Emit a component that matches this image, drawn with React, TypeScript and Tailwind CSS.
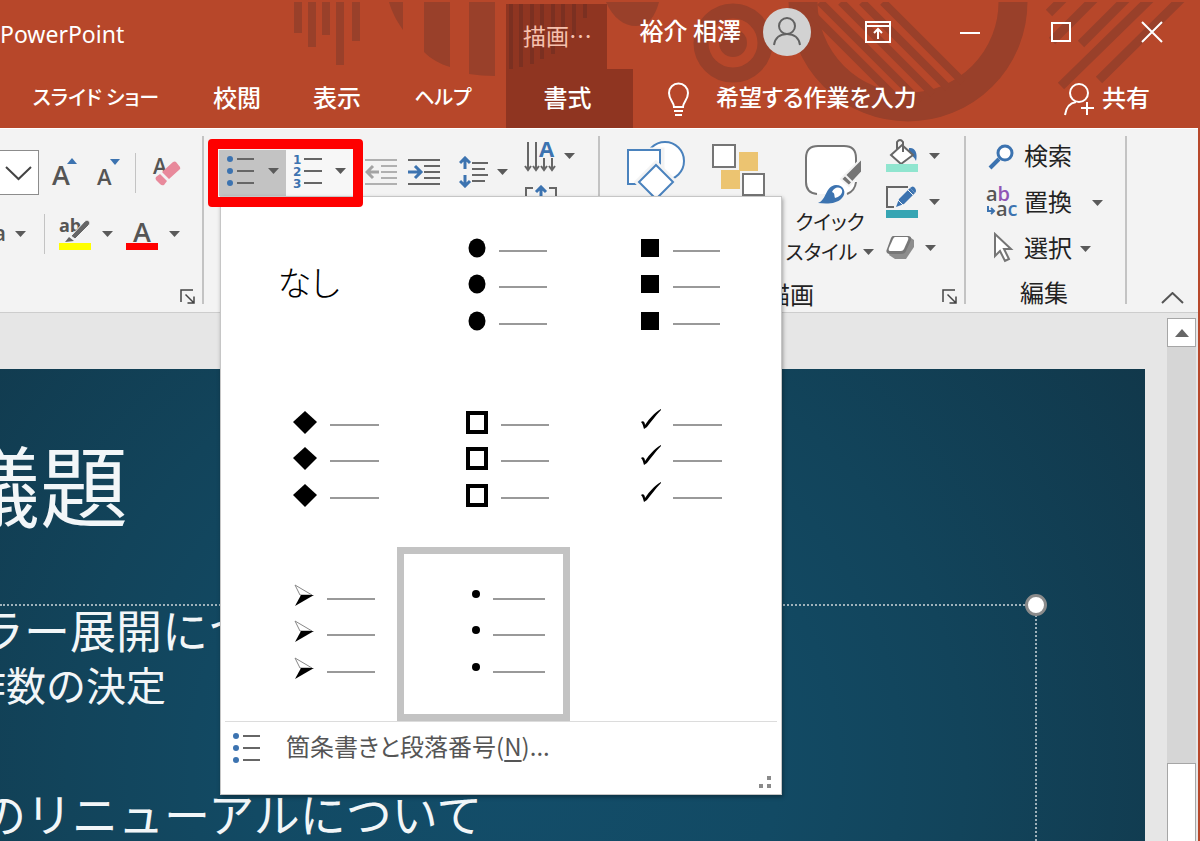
import type { ReactNode } from "react";

type Glyph = "disc" | "square" | "diamond" | "box" | "check" | "arrow" | "dot";

const BULLETS: { glyph: Glyph; label: string; lineFrom: number; lineTo: number; selected?: boolean }[] = [
  { glyph: "disc", label: "塗りつぶし丸の行頭文字", lineFrom: 102, lineTo: 150 },
  { glyph: "square", label: "塗りつぶし四角の行頭文字", lineFrom: 103, lineTo: 150 },
  { glyph: "diamond", label: "塗りつぶしひし形の行頭文字", lineFrom: 106, lineTo: 155 },
  { glyph: "box", label: "四角の行頭文字", lineFrom: 104, lineTo: 152 },
  { glyph: "check", label: "チェック マークの行頭文字", lineFrom: 103, lineTo: 152 },
  { glyph: "arrow", label: "矢印の行頭文字", lineFrom: 103, lineTo: 151 },
  { glyph: "dot", label: "小さい丸の行頭文字", lineFrom: 96, lineTo: 148, selected: true },
];

const ROWS = [49, 85, 122];

function Caret() {
  return (
    <svg width="11" height="6" viewBox="0 0 11 6" className="shrink-0" aria-hidden="true">
      <path d="M0 0h11L5.500 6z" fill="#5a5a5a" />
    </svg>
  );
}

function CaretButton({ label, className = "" }: { label: string; className?: string }) {
  return (
    <button type="button" aria-label={label} className={`shrink-0 ${className}`}>
      <Caret />
    </button>
  );
}

function Separator() {
  return <div className="w-0.5 shrink-0 bg-[#c3c3c3]" />;
}

function Launcher({ label }: { label: string }) {
  return (
    <button type="button" aria-label={label} className="shrink-0">
      <svg width="15" height="15" viewBox="0 0 15 15" fill="none" stroke="#444" strokeWidth="1.500">
        <path d="M1 13V1h12" />
        <path d="M5.500 5.500l8 8M14 7.500V14H7.500" />
      </svg>
    </button>
  );
}

function BulletListIcon({ className = "" }: { className?: string }) {
  return (
    <svg width="28" height="30" viewBox="0 0 28 30" className={`shrink-0 ${className}`} aria-hidden="true">
      {[3, 15, 27].map((y) => (
        <g key={y}>
          <circle cx="3" cy={y} r="3" fill="#3c73b0" />
          <path d={`M10 ${y}h17`} stroke="#666" strokeWidth="2" />
        </g>
      ))}
    </svg>
  );
}

function GlyphShape({ glyph, y }: { glyph: Glyph; y: number }) {
  switch (glyph) {
    case "disc":
      return <ellipse cx="80" cy={y} rx="8.500" ry="9.500" />;
    case "square":
      return <rect x="71" y={y - 9} width="18" height="18" />;
    case "diamond":
      return <path d={`M81 ${y - 11}l12 11-12 12-12-12z`} />;
    case "box":
      return <rect x="71" y={y - 9} width="18" height="19" fill="none" stroke="#000" strokeWidth="4" />;
    case "check":
      return <path d={`M71 ${y}c2-2 4 0 4 3C80 ${y - 4} 84 ${y - 9} 91 ${y - 13}l0 1C85 ${y - 6} 81 ${y} 77 ${y + 5}l-3 2c-1-3-1-5-3-7z`} />;
    case "arrow":
      return (
        <>
          <path d={`M71 ${y - 11}l17 10H76z`} fill="#fff" stroke="#888" />
          <path d={`M90 ${y - 1}L71 ${y + 10}l6-11z`} />
        </>
      );
    case "dot":
      return <circle cx="79" cy={y - 2} r="4" />;
  }
}

function BulletGallery() {
  return (
    <div
      role="menu"
      aria-label="箇条書き"
      className="absolute left-px top-full z-10 w-[562px] border border-[#c6c6c6] bg-white shadow-[1px_2px_4px_rgba(0,0,0,0.35)]"
    >
      <div className="grid grid-cols-[repeat(3,173px)] auto-rows-[174px] pl-[3px] pt-0.5">
        <button type="button" role="menuitem" className="pb-2 pr-1 text-[34px] font-light leading-none text-black">
          なし
        </button>
        {BULLETS.map(({ glyph, label, lineFrom, lineTo, selected }) => (
          <button
            key={glyph}
            type="button"
            role="menuitem"
            aria-label={label}
            className={selected ? "outline-[7px] -outline-offset-[7px] outline-[#c3c3c3] outline-solid" : ""}
          >
            <svg width="173" height="174" viewBox="0 0 173 174" aria-hidden="true">
              {ROWS.map((y) => (
                <g key={y}>
                  <GlyphShape glyph={glyph} y={y} />
                  <path d={`M${lineFrom} ${y + 3}H${lineTo}`} stroke="#999" strokeWidth="2" />
                </g>
              ))}
            </svg>
          </button>
        ))}
      </div>
      <div className="mx-1 border-t border-[#dcdcdc]" />
      <button type="button" role="menuitem" className="flex h-[52px] w-full items-center pl-3 text-2xl text-[#555]">
        <BulletListIcon />
        <span className="ml-[25px] pb-1">
          箇条書きと段落番号(<u className="underline-offset-4">N</u>)...
        </span>
      </button>
      <div className="flex justify-end pb-1 pr-2">
        <svg width="15" height="16" viewBox="0 0 15 16" fill="#8a8a8a" aria-hidden="true">
          <rect x="9" y="2" width="4" height="4" />
          <rect x="1" y="10" width="4" height="4" />
          <rect x="9" y="10" width="4" height="4" />
        </svg>
      </div>
    </div>
  );
}

function HeaderPattern() {
  return (
    <svg
      width="1200"
      height="128"
      viewBox="0 0 1200 128"
      className="absolute right-0 top-0"
      fill="#99402a"
      aria-hidden="true"
    >
      <clipPath id="dial">
        <path d="M788 2h240a120 120 0 0 1-240 0z" />
      </clipPath>
      <clipPath id="edge">
        <rect x="1045" y="2" width="150" height="100" />
      </clipPath>
      <path d="M294 2h8v31h-8zM308 2h8v45h-8zM322 2h8v33h-8zM336 2h8v63h-8zM352 2h8v39h-8z" />
      <path d="M389 2h14v28C396 20 392 12 389 2zM424 2h26v65c-10-3-19-8-26-15zM469 2h26v74c-9 0-18-1-26-2z" />
      <path d="M606 2h53c-4 15-11 24-23 24S613 18 606 2z" />
      <circle cx="733" cy="43" r="32" fill="none" stroke="#99402a" strokeWidth="15" />
      <circle cx="733" cy="43" r="14" />
      <g clipPath="url(#dial)" fill="none" stroke="#99402a">
        <circle cx="908" cy="2" r="105" strokeWidth="29" />
        <path d="M800 2l100 100M820 2l100 100M841 2l92 92M862 2l86 86M883 2l80 80" strokeWidth="8" />
      </g>
      <g clipPath="url(#edge)" stroke="#99402a" strokeWidth="9">
        <path d="M1064 -2l-15 15M1095 -2l-43 43M1127 -2l-46 46M1151 -2l-90 88M1182 -2l-83 82" />
      </g>
    </svg>
  );
}

function TitleBar() {
  return (
    <div className="relative flex h-[69px]">
      <span className="w-[506px] pt-[17px] font-['Noto_Sans'] text-[23px] font-normal leading-[34px]">PowerPoint</span>
      <div className="relative mt-1 w-[101px] bg-[#8f3521]">
        <svg width="101" height="65" viewBox="0 0 101 65" className="absolute left-0 top-0" aria-hidden="true">
          <path
            d="M5 0v65M15 0v63M26 0v60M36 0v55M47 0v50M57 0v43M68 0v34M79 0v14"
            stroke="#7b3021"
            strokeWidth="4"
          />
        </svg>
        <span className="relative block pl-[17px] pt-[15px] text-[23px] font-normal leading-8 text-[#f6c1ae]">描画…</span>
      </div>
      <div className="ml-auto flex h-[63px] items-center pr-[37px]">
        <span className="pb-1 text-2xl">裕介 相澤</span>
        <button type="button" aria-label="アカウント" className="ml-[22px] flex size-12 items-center justify-center rounded-full bg-[#d2d2d2]">
          <svg width="28" height="30" viewBox="0 0 28 30" fill="none" stroke="#626262" strokeWidth="2">
            <circle cx="14" cy="9" r="8" />
            <path d="M1 28c1-7 6-11 13-11s12 4 13 11" />
          </svg>
        </button>
        <button type="button" aria-label="リボンの表示オプション" className="ml-[54px]">
          <svg width="26" height="22" viewBox="0 0 26 22" fill="none" stroke="#fff" strokeWidth="2">
            <path d="M1 1h24v20H1zM1 5h24M13 18V9M9 12l4-4 4 4" />
          </svg>
        </button>
        <button type="button" aria-label="最小化" className="ml-[69px]">
          <svg width="20" height="22" viewBox="0 0 20 22">
            <path d="M0 12h20" stroke="#fff" strokeWidth="2" />
          </svg>
        </button>
        <button type="button" aria-label="最大化" className="ml-[70px]">
          <svg width="22" height="22" viewBox="0 0 22 22">
            <path d="M2 2h18v18H2z" fill="none" stroke="#fff" strokeWidth="2" />
          </svg>
        </button>
        <button type="button" aria-label="閉じる" className="ml-[69px]">
          <svg width="22" height="22" viewBox="0 0 22 22">
            <path d="M1 1l20 20M21 1L1 21" stroke="#fff" strokeWidth="2" />
          </svg>
        </button>
      </div>
    </div>
  );
}

function Tab({ className, children }: { className: string; children: ReactNode }) {
  return (
    <button type="button" role="tab" className={`shrink-0 whitespace-nowrap pb-1 ${className}`}>
      {children}
    </button>
  );
}

function TabRow() {
  return (
    <div className="relative flex h-[59px]">
      <div role="tablist" className="flex">
        <Tab className="w-48 text-[20px]">スライド ショー</Tab>
        <Tab className="w-[90px] text-2xl">校閲</Tab>
        <Tab className="w-[110px] text-2xl">表示</Tab>
        <Tab className="w-[102px] text-[20px]">ヘルプ</Tab>
        <Tab className="ml-3 w-[127px] bg-[#8f3521] pr-1 text-2xl">書式</Tab>
      </div>
      <button type="button" className="ml-[34px] flex items-center gap-[26px] text-[23px]">
        <svg width="23" height="34" viewBox="0 0 23 34" fill="none" stroke="#fff" strokeWidth="2">
          <path d="M7 25c0-5-5-7-5-14a9.500 9.500 0 0 1 19 0c0 7-5 9-5 14zM7 29h9M8 33h7" />
        </svg>
        <span className="pb-1">希望する作業を入力</span>
      </button>
      <button type="button" className="ml-auto flex items-center gap-2 pr-[50px] text-2xl">
        <svg width="30" height="34" viewBox="0 0 30 34" fill="none" stroke="#fff" strokeWidth="2">
          <circle cx="15" cy="11" r="9" />
          <path d="M1 33c1-7 4-12 11-13M17 26h13M23 20v13" />
        </svg>
        <span className="pb-1">共有</span>
      </button>
    </div>
  );
}

function FontGroup() {
  return (
    <section aria-label="フォント" className="flex w-[202px] shrink-0 flex-col pt-3.5">
      <div className="flex h-[45px] items-center">
        <div className="relative h-full w-[39px]">
          <select
            aria-label="フォント サイズ"
            className="h-full w-full appearance-none border border-l-0 border-[#8c8c8c] bg-white"
          />
          <svg
            width="27"
            height="15"
            viewBox="0 0 27 15"
            fill="none"
            stroke="#444"
            strokeWidth="2"
            className="pointer-events-none absolute left-[5px] top-4"
          >
            <path d="M1 1l12.500 12L26 1" />
          </svg>
        </div>
        <button type="button" aria-label="フォント サイズの拡大" className="ml-[13px]">
          <svg width="26" height="30" viewBox="0 0 26 30" className="overflow-visible">
            <text x="0" y="27" fontSize="27" fontFamily="Open Sans, sans-serif" fontWeight="600" fill="#555">A</text>
            <path d="M15 6l5-6 5 6z" fill="#3c73b0" />
          </svg>
        </button>
        <button type="button" aria-label="フォント サイズの縮小" className="ml-[19px]">
          <svg width="24" height="30" viewBox="0 0 24 30" className="overflow-visible">
            <text x="0" y="27" fontSize="22" fontFamily="Open Sans, sans-serif" fontWeight="600" fill="#555">A</text>
            <path d="M13 1h10l-5 6z" fill="#3c73b0" />
          </svg>
        </button>
        <div className="ml-3.5 h-10 w-px bg-[#c3c3c3]" />
        <button type="button" aria-label="すべての書式をクリア" className="ml-4">
          <svg width="30" height="31" viewBox="0 0 30 31" className="overflow-visible">
            <text x="1" y="17" fontSize="21" fontFamily="Open Sans, sans-serif" fontWeight="600" fill="#555">A</text>
            <path d="M8 17L22 5l8 8-12 12z" fill="#f3f3f3" />
            <path d="M10 15L21 5q2-1 3 0l4 5q1 2-1 3L17 22z" fill="#e8899b" />
            <path d="M8 17l7 7-3 4q-2 1-4-1l-4-4q-1-2 0-3z" fill="#e8899b" />
          </svg>
        </button>
      </div>
      <div className="mt-[19px] flex h-10 items-center">
        <span className="flex w-1.5 justify-end overflow-hidden pb-1 font-['Open_Sans'] text-[22px] font-semibold text-[#555]">
          Aa
        </span>
        <CaretButton label="文字種の変換" className="ml-[9px]" />
        <div className="ml-[18px] h-full w-px bg-[#c3c3c3]" />
        <button type="button" aria-label="蛍光ペンの色" className="ml-3.5">
          <svg width="32" height="33" viewBox="0 0 32 33" className="overflow-visible">
            <text x="0" y="14" fontSize="18" fontFamily="Open Sans, sans-serif" fontWeight="700" fill="#555">ab</text>
            <path d="M12 18L26 3q2-2 4 0 2 2 0 4L16 21z" fill="#666" stroke="#f3f3f3" />
            <path d="M10 19l5 4-9 1z" fill="#666" />
            <path d="M0 25h32v7H0z" fill="#ff0" />
          </svg>
        </button>
        <CaretButton label="蛍光ペンの色の一覧" className="ml-[11px]" />
        <button type="button" aria-label="フォントの色" className="ml-[13px]">
          <svg width="32" height="33" viewBox="0 0 32 33" className="overflow-visible">
            <text x="7" y="24" fontSize="27" fontFamily="Open Sans, sans-serif" fontWeight="600" fill="#555">A</text>
            <path d="M0 25h32v7H0z" fill="red" />
          </svg>
        </button>
        <CaretButton label="フォントの色の一覧" className="ml-[11px]" />
      </div>
      <div className="mt-auto flex justify-end pr-[7px]">
        <Launcher label="フォントの詳細" />
      </div>
    </section>
  );
}

function ParagraphGroup() {
  return (
    <section aria-label="段落" className="flex w-[394px] shrink-0 items-start pl-[15px]">
      <div className="relative mt-3.5 flex h-[46px]">
        <button
          type="button"
          aria-label="箇条書き"
          aria-haspopup="menu"
          aria-expanded="true"
          className="flex w-[67px] items-center bg-[#c3c3c3] pb-1 pl-2"
        >
          <BulletListIcon />
          <span className="ml-[13px]">
            <Caret />
          </span>
        </button>
        <button type="button" aria-label="段落番号" className="flex w-[67px] items-center bg-[#f7f7f7] pb-1 pl-[7px]">
          <svg width="30" height="34" viewBox="0 0 30 34" className="overflow-visible">
            {[5, 17, 29].map((y, i) => (
              <g key={y}>
                <text x="0" y={y + 5} fontSize="12" fontFamily="DejaVu Sans, sans-serif" fontWeight="700" fill="#3c73b0">
                  {i + 1}
                </text>
                <path d={`M11 ${y}h18`} stroke="#666" strokeWidth="2" />
              </g>
            ))}
          </svg>
          <span className="ml-3">
            <Caret />
          </span>
        </button>
        <BulletGallery />
        {/* Red callout around the two list buttons. */}
        <div className="pointer-events-none absolute -left-[11px] -top-[11px] z-20 h-[68px] w-[155px] rounded border-10 border-[#fe0000]" />
      </div>
      <div className="mt-5 flex h-8 items-center">
        <button type="button" aria-label="インデントを減らす" className="ml-3">
          <svg width="32" height="28" viewBox="0 0 32 28" fill="none" stroke="#b0b0b0" strokeWidth="2">
            <path d="M0 2h32M16 8h16M16 14h16M16 20h16M0 26h32" />
            <path d="M14 14H2M8 8l-6 6 6 6" stroke="#a3a3a3" strokeWidth="3" />
          </svg>
        </button>
        <button type="button" aria-label="インデントを増やす" className="ml-[11px]">
          <svg width="32" height="28" viewBox="0 0 32 28" fill="none" stroke="#666" strokeWidth="2">
            <path d="M0 2h32M16 8h16M16 14h16M16 20h16M0 26h32" />
            <path d="M0 14h12M7 8l6 6-6 6" stroke="#3c73b0" strokeWidth="3" />
          </svg>
        </button>
        <button type="button" aria-label="行間" className="ml-[19px] flex items-center gap-[9px]">
          <svg width="29" height="32" viewBox="0 0 29 32" fill="none" stroke="#666" strokeWidth="2">
            <path d="M13 7h16M13 13h13M13 19h16M13 25h13" />
            <path d="M6 13V2M1 7l5-5 5 5M6 19v11M1 25l5 5 5-5" stroke="#3c73b0" strokeWidth="3" />
          </svg>
          <Caret />
        </button>
      </div>
      <div className="ml-[17px] mt-1">
        <button type="button" aria-label="文字列の方向" className="flex items-center gap-[9px]">
          <svg width="30" height="32" viewBox="0 0 30 32" fill="none" stroke="#666" strokeWidth="2" className="overflow-visible">
            <path d="M3 2v27M11 2v27M19 18v11M27 18v11M0 26l3 4 3-4M8 26l3 4 3-4M16 26l3 4 3-4M24 26l3 4 3-4" />
            <text x="14" y="17" fontSize="22" fontFamily="Open Sans, sans-serif" fontWeight="700" fill="#3c73b0" stroke="none">A</text>
          </svg>
          <Caret />
        </button>
        <button type="button" aria-label="文字の配置" className="mt-[13px] block">
          <svg width="32" height="30" viewBox="0 0 32 30" fill="none" stroke="#666" strokeWidth="2">
            <path d="M8 3H1v24h30V3h-7" />
            <path d="M16 12V2M11 7l5-5 5 5" stroke="#3c73b0" strokeWidth="3" />
          </svg>
        </button>
      </div>
    </section>
  );
}

function DrawingGroup() {
  return (
    <section aria-label="図形描画" className="flex w-[364px] shrink-0 flex-col">
      <div className="flex items-start">
        <button type="button" aria-label="図形" className="ml-[26px] mt-1">
          <svg width="62" height="64" viewBox="0 0 62 64" fill="#fff" stroke="#4a82bd" strokeWidth="2">
            <circle cx="39" cy="21" r="19" />
            <path d="M1 10h35v34H1z" stroke="#f3f3f3" strokeWidth="5" />
            <path d="M2 10h32v34H2z" />
            <path d="M30 24l18 18-18 18-18-18z" stroke="#f3f3f3" strokeWidth="6" />
            <path d="M30 25l17 17-17 17-17-17z" />
          </svg>
        </button>
        <button type="button" aria-label="配置" className="ml-6 mt-[7px]">
          <svg width="54" height="56" viewBox="0 0 54 56" fill="#fff" stroke="#757575" strokeWidth="2">
            <path d="M27 9h19v19H27zM9 27h19v19H9z" fill="#ecc471" stroke="none" />
            <path d="M0 0h26v26H0zM28 28h26v26H28z" fill="#f3f3f3" stroke="none" />
            <path d="M1 2h22v22H1zM31 31h21v21H31z" />
          </svg>
        </button>
        <button type="button" className="ml-5 mt-2 flex w-[88px] flex-col items-center text-[20px] leading-[30px] text-[#222]">
          <svg width="64" height="63" viewBox="0 0 64 63" className="shrink-0" fill="none">
            <path d="M22 50h-1Q8 50 8 38V14Q8 2 20 2h26q12 0 12 12v24q0 12-12 12z" fill="#fff" />
            <path d="M19 50Q8 49 8 38V14Q8 2 20 2h26q12 0 12 12v6M58 38q-1 9-9 12" stroke="#757575" strokeWidth="2" />
            <path d="M64 14v14L51 42l-8-7z" fill="#757575" stroke="#f3f3f3" strokeWidth="2" />
            <path d="M47 31l8 8" stroke="#f3f3f3" strokeWidth="2" />
            <path d="M20 59c9-3 7-17 18-18 8 0 11 8 6 13-5 6-15 6-24 5z" fill="#3c73b0" />
            <path d="M34 48c2-5 8-6 10-2 1 4-3 7-7 8-1-3 0-5-3-6z" fill="#fff" />
          </svg>
          <span>クイック</span>
          <span className="flex items-center gap-1.5 whitespace-nowrap">
            スタイル
            <Caret />
          </span>
        </button>
        <div className="ml-3 mt-[3px] flex flex-col gap-[13px]">
          <button type="button" aria-label="図形の塗りつぶし" className="flex items-center gap-[11px]">
            <svg width="32" height="33" viewBox="0 0 32 33" fill="none" stroke="#666" strokeWidth="2">
              <path d="M23 9c6-1 9 5 7 13-2-4-4-6-7-7z" fill="#3c73b0" stroke="none" />
              <path d="M16 6l11 10-12 9L5 16z" fill="#fff" />
              <path d="M11 10V3q3-4 6 0v10" />
              <path d="M0 25h32v8H0z" fill="#90e5cf" stroke="none" />
            </svg>
            <Caret />
          </button>
          <button type="button" aria-label="図形の枠線" className="flex items-center gap-[11px]">
            <svg width="32" height="33" viewBox="0 0 32 33" fill="none">
              <path d="M8 22H1V2h21" stroke="#666" strokeWidth="2" />
              <path d="M10 22l3-8L24 3l5 5-11 11z" fill="#3c73b0" />
              <path d="M22 5l5 5M12 15l5 5" stroke="#f3f3f3" strokeWidth="1" />
              <path d="M24 3q3-3 5 0t0 5z" fill="#3c73b0" />
              <path d="M0 25h32v8H0z" fill="#36a5b3" />
            </svg>
            <Caret />
          </button>
          <button type="button" aria-label="図形の効果" className="flex items-center gap-[11px]">
            <svg width="28" height="33" viewBox="0 0 28 33">
              <path d="M3 24l6 4h11l8-12v-7L22 5 9 10z" fill="#8d8d8d" />
              <path d="M7 5h15q4 0 3 4l-5 11q-1 3-5 3H3q-4-1-2-5L5 7q1-2 2-2z" fill="#777" />
              <path d="M9 6h12q2 0 1 3l-4 9q-1 2-3 2H4q-2 0-1-3l4-9q1-2 2-2z" fill="#fff" />
            </svg>
            <Caret />
          </button>
        </div>
      </div>
      <div className="mt-auto flex h-4 items-center pl-[38px] pr-[7px]">
        <h2 className="flex-1 pb-1 text-center text-2xl leading-4 text-[#222]">描画</h2>
        <Launcher label="図形の書式設定" />
      </div>
    </section>
  );
}

function EditingGroup() {
  return (
    <section aria-label="編集" className="flex w-[159px] shrink-0 flex-col pl-5 text-2xl text-[#222]">
      <button type="button" className="flex h-[46px] items-center gap-1.5 pb-1">
        <svg width="32" height="30" viewBox="0 0 32 30" fill="none" stroke="#3c73b0">
          <circle cx="19" cy="11" r="7" strokeWidth="3" fill="#fff" />
          <path d="M13 17l-9 9" strokeWidth="4" />
        </svg>
        <span className="pb-1">検索</span>
      </button>
      <button type="button" className="flex h-[46px] items-center gap-1.5 pb-1">
        <svg
          width="32"
          height="34"
          viewBox="0 0 32 34"
          fontFamily="Open Sans, sans-serif"
          fontSize="20"
          fontWeight="600"
          className="overflow-visible"
        >
          <text x="0" y="15" fill="#555">
            a<tspan fill="#9055b5">b</tspan>
          </text>
          <text x="10" y="30" fill="#555">
            a<tspan fill="#3c73b0">c</tspan>
          </text>
          <path d="M2 20v5h5M5 22l3 3-3 3" fill="none" stroke="#3c73b0" strokeWidth="2" />
        </svg>
        <span className="pb-1">置換</span>
        <span className="ml-3.5">
          <Caret />
        </span>
      </button>
      <button type="button" className="flex h-[46px] items-center gap-1.5 pb-1">
        <svg width="32" height="34" viewBox="0 0 32 34" fill="#fff" stroke="#757575" strokeWidth="2">
          <path d="M9 2v22l5-5 5 10 4-2-5-10h7z" />
        </svg>
        <span className="pb-1">選択</span>
        <span className="ml-0.5">
          <Caret />
        </span>
      </button>
      <h2 className="mt-auto pb-1 pr-[23px] text-center leading-4">編集</h2>
    </section>
  );
}

function Ribbon() {
  return (
    <div className="relative z-10 flex h-[185px] shrink-0 border-b border-t border-b-[#cdcdcd] border-t-white bg-[#f3f3f3] pb-2 pt-[7px]">
      <FontGroup />
      <Separator />
      <ParagraphGroup />
      <Separator />
      <DrawingGroup />
      <Separator />
      <EditingGroup />
      <Separator />
      <button type="button" aria-label="リボンを折りたたむ" className="ml-auto mr-[14px] self-end">
        <svg width="23" height="12" viewBox="0 0 23 12" fill="none" stroke="#555" strokeWidth="2">
          <path d="M1 11L11.500 1 22 11" />
        </svg>
      </button>
    </div>
  );
}

function Slide() {
  return (
    <main className="flex flex-1 flex-col overflow-hidden whitespace-nowrap bg-[radial-gradient(circle_at_45%_85%,#134d69_0%,#124a64_35%,#12445b_60%,#11384b_100%)] pt-[69px] text-[#f2f6f8]">
      <h1 className="-ml-12 text-[88px] leading-[88px]">議題</h1>
      <div className="relative mr-[108px] mt-[78px] flex-1 border-r-2 border-t-2 border-dotted border-[#9fb2bb] leading-[44px] [font-feature-settings:normal]">
        <p className="-ml-[68px] text-[46px]">カラー展開について</p>
        <p className="-ml-[34px] mt-3 text-[40px]">作数の決定</p>
        <p className="-ml-5 mt-[84px] text-[46px]">のリニューアルについて</p>
        <div className="absolute -right-3 -top-3 size-[22px] rounded-full border-[3px] border-[#8b8b8b] bg-white" />
      </div>
    </main>
  );
}

function ScrollBar() {
  return (
    <div className="-mt-[51px] flex w-[29px] shrink-0 flex-col bg-[#d6d6d6]">
      <button
        type="button"
        aria-label="上へスクロール"
        className="flex h-[29px] items-center justify-center border border-[#a6a6a6] bg-white"
      >
        <svg width="14" height="8" viewBox="0 0 14 8">
          <path d="M7 0l7 8H0z" fill="#666" />
        </svg>
      </button>
      <div className="mt-auto h-[78px] border border-b-0 border-[#a6a6a6] bg-white" />
    </div>
  );
}

export default function App() {
  return (
    <div
      lang="ja"
      className="flex min-h-screen flex-col overflow-hidden bg-[#e6e6e6] font-['Noto_Sans_CJK_JP',sans-serif] [font-feature-settings:'palt']"
    >
      <header className="relative shrink-0 overflow-hidden bg-[#b7472a] font-medium text-white">
        <HeaderPattern />
        <TitleBar />
        <TabRow />
      </header>
      <div className="flex flex-1 flex-col border-r-2 border-[#b7472a]">
        <Ribbon />
        <div className="flex flex-1 pr-0.5 pt-14">
          <Slide />
          <div className="w-[22px] shrink-0" />
          <ScrollBar />
        </div>
      </div>
    </div>
  );
}
